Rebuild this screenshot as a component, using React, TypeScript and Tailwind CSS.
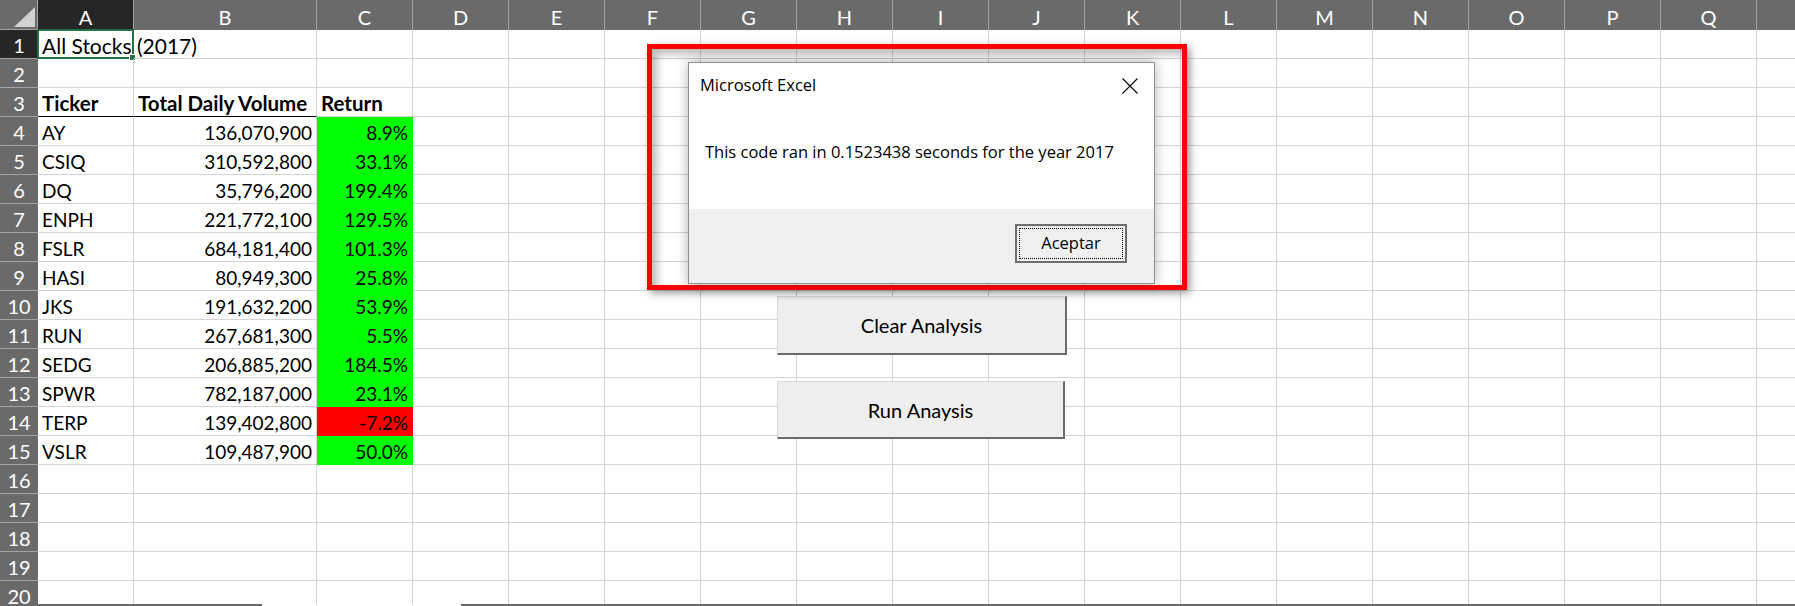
// Sheet data (rows 4-15)
const stocks: [string, string, string, boolean][] = [
  ['AY', '136,070,900', '8.9%', true],
  ['CSIQ', '310,592,800', '33.1%', true],
  ['DQ', '35,796,200', '199.4%', true],
  ['ENPH', '221,772,100', '129.5%', true],
  ['FSLR', '684,181,400', '101.3%', true],
  ['HASI', '80,949,300', '25.8%', true],
  ['JKS', '191,632,200', '53.9%', true],
  ['RUN', '267,681,300', '5.5%', true],
  ['SEDG', '206,885,200', '184.5%', true],
  ['SPWR', '782,187,000', '23.1%', true],
  ['TERP', '139,402,800', '-7.2%', false],
  ['VSLR', '109,487,900', '50.0%', true],
];

// R is only partly on screen, its letter falls outside the window
const letters = ['A', 'B', 'C', 'D', 'E', 'F', 'G', 'H', 'I', 'J', 'K', 'L', 'M', 'N', 'O', 'P', 'Q', ''];

function ColHeader({ label, active }: { label: string; active?: boolean }) {
  return (
    <div
      className={
        'h-[30px] border-r border-[#a3a3a3] text-center text-[20px] leading-[34px] text-white ' +
        (active ? 'bg-[#262626]' : 'bg-[#6a6a6a]')
      }
    >
      {label}
    </div>
  );
}

function RowHeader({ n, active }: { n: number; active?: boolean }) {
  return (
    <div
      className={
        'h-[29px] border-b border-[#a3a3a3] text-center text-[20px] leading-[31px] text-white ' +
        (active ? 'bg-[#262626]' : 'bg-[#6a6a6a]')
      }
    >
      {n}
    </div>
  );
}

type CellProps = {
  children?: React.ReactNode;
  right?: boolean;
  bold?: boolean;
  wide?: boolean;
  fill?: 'green' | 'red';
  thick?: boolean;
  selected?: boolean;
};

function Cell({ children, right, bold, wide, fill, thick, selected }: CellProps) {
  let cls = 'relative h-[29px] border-r border-b px-[4px] leading-[31px] whitespace-nowrap text-black ';
  if (fill === 'green') cls += 'bg-[#00ff00] border-[#00ff00] ';
  else if (fill === 'red') cls += 'bg-[#ff0000] border-[#ff0000] ';
  else if (thick) cls += 'border-r-[#d4d4d4] border-b-black ';
  else cls += 'border-[#d4d4d4] ';
  if (right) cls += 'text-right ';
  if (bold) cls += 'font-bold text-[20.5px] ';
  if (wide) cls += 'text-[21px] ';
  return (
    <div className={cls}>
      {children}
      {selected && (
        <div className="pointer-events-none absolute -left-px -top-px -right-px -bottom-px border-2 border-[#217346]">
          <div className="absolute -right-[4px] -bottom-[4px] h-[7px] w-[7px] border border-white bg-[#217346]" />
        </div>
      )}
    </div>
  );
}

function SheetRow({ n }: { n: number }) {
  const cells: React.ReactNode[] = [];
  const s = n >= 4 && n <= 15 ? stocks[n - 4] : null;
  for (let i = 0; i < letters.length; i++) {
    const key = 'c' + i + '-' + n;
    if (n === 1 && i === 0) {
      cells.push(
        <Cell key={key} selected wide>
          All Stocks (2017)
        </Cell>
      );
    } else if (n === 3 && i < 3) {
      cells.push(
        <Cell key={key} bold thick={i < 2}>
          {['Ticker', 'Total Daily Volume', 'Return'][i]}
        </Cell>
      );
    } else if (s && i === 0) {
      cells.push(<Cell key={key}>{s[0]}</Cell>);
    } else if (s && i === 1) {
      cells.push(
        <Cell key={key} right>
          {s[1]}
        </Cell>
      );
    } else if (s && i === 2) {
      cells.push(
        <Cell key={key} right fill={s[3] ? 'green' : 'red'}>
          {s[2]}
        </Cell>
      );
    } else {
      cells.push(<Cell key={key} />);
    }
  }
  return (
    <>
      <RowHeader n={n} active={n === 1} />
      {cells}
    </>
  );
}

function SheetButton({ label, className }: { label: string; className: string }) {
  return (
    <div
      className={
        'absolute flex items-center justify-center border-t border-l border-[#d9d9d9] border-r-2 border-b-2 border-r-[#6b6b6b] border-b-[#6b6b6b] bg-[#efefef] text-[20px] text-black ' +
        className
      }
    >
      {label}
    </div>
  );
}

export default function App() {
  const rows = Array.from({ length: 20 }, (_, i) => i + 1);
  return (
    <div className="relative flex h-[606px] w-full flex-col overflow-hidden bg-white font-['Lato',sans-serif] text-[19px]">
      <div className="flex-1 overflow-hidden">
        <div className="grid w-[1853px] grid-cols-[38px_96px_183px_96px_repeat(15,96px)]">
          {/* corner */}
          <div className="relative h-[30px] border-r border-b border-[#a3a3a3] bg-[#6a6a6a]">
            <svg className="absolute left-[14px] top-[7px]" width="21" height="20" viewBox="0 0 21 20">
              <polygon points="0,20 21,20 21,0" fill="#d2d2d2" />
            </svg>
          </div>
          {letters.map((l, i) => (
            <ColHeader key={'h' + i} label={l} active={i === 0} />
          ))}
          {rows.map(n => (
            <SheetRow key={n} n={n} />
          ))}
        </div>
      </div>
      {/* top edge of the tab strip */}
      <div className="flex h-[2px]">
        <div className="w-[262px] bg-[#6a6a6a]" />
        <div className="w-[199px]" />
        <div className="flex-1 bg-[#6a6a6a]" />
      </div>

      {/* macro buttons on the sheet */}
      <SheetButton label="Clear Analysis" className="left-[777px] top-[296px] h-[59px] w-[290px]" />
      <SheetButton label="Run Anaysis" className="left-[777px] top-[381px] h-[58px] w-[288px]" />

      {/* red highlight rectangle */}
      <div className="absolute left-[647px] top-[44px] h-[246px] w-[540px] border-[5px] border-[#ff0000] shadow-[inset_5px_5px_8px_rgba(0,0,0,0.28),3px_3px_8px_rgba(0,0,0,0.4)]" />

      {/* message box */}
      <div className="absolute left-[688px] top-[62px] flex h-[222px] w-[467px] flex-col border border-[#8f8f8f] bg-white font-['Open_Sans',sans-serif] text-[16.5px] text-black shadow-[0_0_12px_rgba(0,0,0,0.3)]">
        <div className="flex h-[146px] flex-col">
          <div className="flex items-center justify-between pl-[11px] pr-[16px] pt-[10px]">
            <span>Microsoft Excel</span>
            <svg width="16" height="16" viewBox="0 0 16 16" className="mt-[1px]">
              <path d="M0.5 0.5 L15.5 15.5 M15.5 0.5 L0.5 15.5" stroke="#000" strokeWidth="1.1" fill="none" />
            </svg>
          </div>
          <div className="pl-[16px] pt-[42px]">This code ran in 0.1523438 seconds for the year 2017</div>
        </div>
        <div className="flex flex-1 items-start justify-end bg-[#f0f0f0] pr-[27px] pt-[15px]">
          <div className="relative flex h-[39px] w-[112px] items-center justify-center border-2 border-[#6e6e6e] bg-[#f0f0f0]">
            <div className="absolute inset-[2px] border border-dotted border-black" />
            Aceptar
          </div>
        </div>
      </div>
    </div>
  );
}
